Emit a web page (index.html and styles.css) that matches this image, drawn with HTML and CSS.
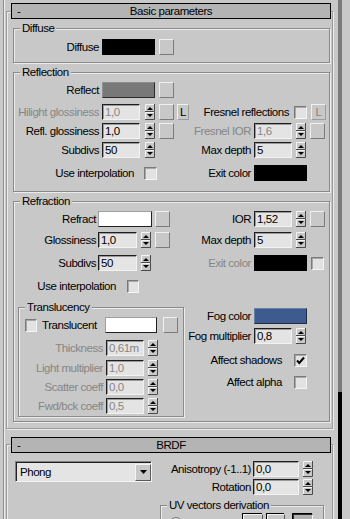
FILE: index.html
```html
<!DOCTYPE html>
<html>
<head>
<meta charset="utf-8">
<title>Basic parameters</title>
<link rel="stylesheet" href="styles.css">
</head>
<body>
<svg class="defs" aria-hidden="true">
  <symbol id="spin" viewBox="0 0 10 16">
    <rect width="10" height="16" fill="#c8c8c8"/>
    <path d="M0.5 7V0.5H9" stroke="#f4f4f4" fill="none"/>
    <path d="M9.5 0V7.5H0" stroke="#4a4a4a" fill="none"/>
    <path d="M0.5 15V8.5H9" stroke="#f4f4f4" fill="none"/>
    <path d="M9.5 8V15.5H0" stroke="#4a4a4a" fill="none"/>
    <path d="M5 3L8 6H2Z" fill="#000"/>
    <path d="M2 10H8L5 13Z" fill="#000"/>
  </symbol>
  <symbol id="down" viewBox="0 0 7 4">
    <path d="M0 0H7L3.5 4Z" fill="#000"/>
  </symbol>
  <symbol id="check" viewBox="0 0 11 11">
    <path d="M2 5.5L4.3 8L9 2.5" stroke="#000" stroke-width="2" fill="none"/>
  </symbol>
</svg>

<div class="panel">
  <div class="main">
    <section class="rollout r1">
      <div class="rh"><span class="minus">-</span><span class="title">Basic parameters</span><span></span></div>

      <div class="grp g-diff">
        <div class="legend">Diffuse</div>
        <div class="row mt5">
          <div class="L">
            <span class="lab w85">Diffuse</span>
            <span class="sw black ml3"></span>
            <span class="btn ml4"></span>
          </div>
        </div>
      </div>

      <div class="grp g-refl">
        <div class="legend">Reflection</div>
        <div class="row mt4">
          <div class="L">
            <span class="lab w85">Reflect</span>
            <span class="sw gray ml3"></span>
            <span class="btn ml4"></span>
          </div>
        </div>
        <div class="row mt6">
          <div class="L">
            <span class="lab w85 dis">Hilight glossiness</span>
            <span class="inp dis ml3">1,0</span>
            <svg class="spin ml5"><use href="#spin"/></svg>
            <span class="btn ml4"></span>
            <span class="lbtn ml3">L</span>
          </div>
          <div class="R end">
            <span class="lab">Fresnel reflections</span>
            <span class="chk ml5"></span>
            <span class="lbtn wide dis ml4">L</span>
          </div>
        </div>
        <div class="row mt3">
          <div class="L">
            <span class="lab w85">Refl. glossiness</span>
            <span class="inp ml3">1,0</span>
            <svg class="spin ml5"><use href="#spin"/></svg>
            <span class="btn ml4"></span>
          </div>
          <div class="R">
            <span class="lab w61 dis">Fresnel IOR</span>
            <span class="inp dis ml3">1,6</span>
            <svg class="spin ml4"><use href="#spin"/></svg>
            <span class="btn ml4"></span>
          </div>
        </div>
        <div class="row mt3">
          <div class="L">
            <span class="lab w85">Subdivs</span>
            <span class="inp ml3">50</span>
            <svg class="spin ml5"><use href="#spin"/></svg>
          </div>
          <div class="R">
            <span class="lab w61">Max depth</span>
            <span class="inp ml3">5</span>
            <svg class="spin ml4"><use href="#spin"/></svg>
          </div>
        </div>
        <div class="row mt7">
          <div class="L">
            <span class="lab w120">Use interpolation</span>
            <span class="chk ml10"></span>
          </div>
          <div class="R">
            <span class="lab w61">Exit color</span>
            <span class="sw black ml3"></span>
          </div>
        </div>
      </div>

      <div class="grp g-refr">
        <div class="legend">Refraction</div>
        <div class="row mt4">
          <div class="L">
            <span class="lab w82">Refract</span>
            <span class="sw white w54 ml2"></span>
            <span class="btn ml3"></span>
          </div>
          <div class="R">
            <span class="lab w61">IOR</span>
            <span class="inp ml3">1,52</span>
            <svg class="spin ml4"><use href="#spin"/></svg>
            <span class="btn ml4"></span>
          </div>
        </div>
        <div class="row mt5">
          <div class="L">
            <span class="lab w82">Glossiness</span>
            <span class="inp w39 ml2">1,0</span>
            <svg class="spin ml4"><use href="#spin"/></svg>
            <span class="btn ml4"></span>
          </div>
          <div class="R">
            <span class="lab w61">Max depth</span>
            <span class="inp ml3">5</span>
            <svg class="spin ml4"><use href="#spin"/></svg>
          </div>
        </div>
        <div class="row mt7">
          <div class="L">
            <span class="lab w82">Subdivs</span>
            <span class="inp w39 ml2">50</span>
            <svg class="spin ml4"><use href="#spin"/></svg>
          </div>
          <div class="R">
            <span class="lab w61 dis">Exit color</span>
            <span class="sw black ml3"></span>
            <span class="chk ml4"></span>
          </div>
        </div>
        <div class="row mt7">
          <div class="L">
            <span class="lab w102">Use interpolation</span>
            <span class="chk small ml11"></span>
          </div>
        </div>

        <div class="lower">
          <div class="grp g-trans">
            <div class="legend">Translucency</div>
            <div class="row mt4">
              <span class="chk small ml6"></span>
              <span class="tlab ml5">Translucent</span>
              <span class="sw white w52"></span>
              <span class="btn ml6"></span>
            </div>
            <div class="row mt7">
              <span class="lab w84 dis">Thickness</span>
              <span class="inp dis ml3">0,61m</span>
              <svg class="spin ml4"><use href="#spin"/></svg>
            </div>
            <div class="row mt4">
              <span class="lab w84 dis">Light multiplier</span>
              <span class="inp dis ml3">1,0</span>
              <svg class="spin ml4"><use href="#spin"/></svg>
            </div>
            <div class="row mt3">
              <span class="lab w84 dis">Scatter coeff</span>
              <span class="inp dis ml3">0,0</span>
              <svg class="spin ml4"><use href="#spin"/></svg>
            </div>
            <div class="row mt3">
              <span class="lab w84 dis">Fwd/bck coeff</span>
              <span class="inp dis ml3">0,5</span>
              <svg class="spin ml4"><use href="#spin"/></svg>
            </div>
          </div>
          <div class="fogcol">
            <div class="row mt1">
              <span class="lab w67">Fog color</span>
              <span class="sw fog ml3"></span>
            </div>
            <div class="row mt4">
              <span class="lab w67">Fog multiplier</span>
              <span class="inp ml3">0,8</span>
              <svg class="spin ml4"><use href="#spin"/></svg>
            </div>
            <div class="row mt8">
              <span class="lab w98">Affect shadows</span>
              <span class="chk ml12"><svg class="tick"><use href="#check"/></svg></span>
            </div>
            <div class="row mt6">
              <span class="lab w98">Affect alpha</span>
              <span class="chk ml12"></span>
            </div>
          </div>
        </div>
      </div>
    </section>

    <section class="rollout r2">
      <div class="rh"><span class="minus">-</span><span class="title">BRDF</span><span></span></div>
      <div class="brdf">
        <div class="dd">
          <span class="ddtext">Phong</span>
          <span class="ddbtn"><svg class="ddarrow"><use href="#down"/></svg></span>
        </div>
        <div class="brcol">
          <div class="row">
            <span class="lab w99">Anisotropy (-1..1)</span>
            <span class="inp w46 ml2">0,0</span>
            <svg class="spin ml4"><use href="#spin"/></svg>
          </div>
          <div class="row mt2">
            <span class="lab w99">Rotation</span>
            <span class="inp w46 ml2">0,0</span>
            <svg class="spin ml4"><use href="#spin"/></svg>
          </div>
          <div class="grp g-uv">
            <div class="legend">UV vectors derivation</div>
            <div class="row mt4">
              <span class="radio ml9"></span>
              <span class="uvlab ml4">Local axis</span>
              <span class="tbtn w20">X</span>
              <span class="tbtn w18 ml4">Y</span>
              <span class="tbtn on w20 ml8">Z</span>
            </div>
          </div>
        </div>
      </div>
    </section>
  </div>
  <div class="scroll"></div>
</div>
</body>
</html>
```

FILE: styles.css
```css
* { box-sizing: border-box; }

body {
  margin: 0;
  width: 350px;
  height: 519px;
  overflow: hidden;
  background: #c8c8c8;
  font-family: "Liberation Sans", Arial, sans-serif;
  font-size: 11.5px;
  letter-spacing: -0.45px;
  color: #000;
}

.defs { position: absolute; width: 0; height: 0; overflow: hidden; }

.panel { display: flex; height: 519px; }

.main {
  width: 338px;
  flex-shrink: 0;
  padding-left: 6px;
  background-image: linear-gradient(to right,
    transparent 3px, #8e8e8e 3px, #8e8e8e 4px,
    #ececec 4px, #ececec 5px, transparent 5px);
}

.scroll {
  width: 4px;
  flex-shrink: 0;
  background: linear-gradient(#7a7a7a 392px, #000 392px);
}

/* rollouts */
.rollout {
  width: 327px;
  border: 1px solid #9a9a9a;
  box-shadow: inset 1px 1px 0 #ececec, 1px 1px 0 #ececec;
}
.r1 { margin-top: 11px; padding-bottom: 6px; }
.r2 { margin-top: 15px; padding-bottom: 40px; }

.rh {
  margin: -9px 1px 0 4px;
  height: 16px;
  border: 1px solid #000;
  background: #b4b4b4;
  display: grid;
  grid-template-columns: 1fr auto 1fr;
  align-items: center;
  line-height: 14px;
}
.r2 .rh { margin-top: -8px; }
.minus { padding-left: 5px; }

/* group boxes */
.grp {
  margin: 9px 2px 0 6px;
  border: 1px solid #8a8a8a;
  box-shadow: inset 1px 1px 0 #ececec, 1px 1px 0 #ececec;
}
.legend {
  width: fit-content;
  margin: -7px 0 0 6px;
  padding: 0 2px;
  height: 12px;
  line-height: 12px;
  background: #c8c8c8;
}
.g-diff { padding-bottom: 7px; }
.g-refl { padding-bottom: 10px; }
.g-refr { padding-bottom: 4px; }

/* rows */
.row { display: flex; align-items: center; height: 16px; }
.L { display: flex; align-items: center; width: 176px; flex-shrink: 0; height: 16px; }
.R { display: flex; align-items: center; flex: 1; height: 16px; }
.R.end { justify-content: flex-end; padding-right: 3px; }

.lab { text-align: right; white-space: nowrap; flex-shrink: 0; }
.dis { color: #868686; }

.w61 { width: 61px; }
.w67 { width: 67px; }
.w82 { width: 82px; }
.w84 { width: 84px; }
.w85 { width: 85px; }
.w98 { width: 98px; }
.w99 { width: 99px; }
.w102 { width: 102px; }
.w120 { width: 120px; }

.mt1 { margin-top: 1px; }
.mt2 { margin-top: 2px; }
.mt3 { margin-top: 3px; }
.mt4 { margin-top: 4px; }
.mt5 { margin-top: 5px; }
.mt6 { margin-top: 6px; }
.mt7 { margin-top: 7px; }
.mt8 { margin-top: 8px; }

.ml2 { margin-left: 2px; }
.ml3 { margin-left: 3px; }
.ml4 { margin-left: 4px; }
.ml5 { margin-left: 5px; }
.ml6 { margin-left: 6px; }
.ml8 { margin-left: 8px; }
.ml9 { margin-left: 9px; }
.ml10 { margin-left: 10px; }
.ml11 { margin-left: 11px; }
.ml12 { margin-left: 12px; }

/* controls */
.inp {
  flex-shrink: 0;
  width: 38px;
  height: 16px;
  border: 1px solid;
  border-color: #1e1e1e #f2f2f2 #f2f2f2 #1e1e1e;
  box-shadow: inset 1px 1px 0 #9a9a9a;
  background: #e4e4e4;
  padding-left: 2px;
  line-height: 14px;
  white-space: nowrap;
  overflow: hidden;
}
.inp.w39 { width: 39px; }
.inp.w46 { width: 46px; }

.spin { width: 10px; height: 16px; flex-shrink: 0; display: block; }

.btn {
  flex-shrink: 0;
  width: 15px;
  height: 16px;
  border: 1px solid;
  border-color: #f0f0f0 #7c7c7c #7c7c7c #f0f0f0;
  background: #c8c8c8;
}

.lbtn {
  flex-shrink: 0;
  width: 12px;
  height: 16px;
  border: 1px solid;
  border-color: #f0f0f0 #9c9c9c #9c9c9c #f0f0f0;
  display: flex;
  align-items: center;
  justify-content: center;
  line-height: 14px;
}
.lbtn.wide { width: 15px; }

.chk {
  flex-shrink: 0;
  width: 13px;
  height: 13px;
  border: 1px solid;
  border-color: #7a7a7a #f4f4f4 #f4f4f4 #7a7a7a;
  box-shadow: inset 1px 1px 0 #a8a8a8;
  background: #e2e2e2;
  display: flex;
  align-items: center;
  justify-content: center;
}
.chk.small { width: 12px; height: 13px; }
.tick { width: 11px; height: 11px; display: block; }

.sw {
  flex-shrink: 0;
  width: 53px;
  height: 16px;
  border: 1px solid;
  border-color: #a0a0a0 #202020 #202020 #a0a0a0;
}
.sw.w54 { width: 54px; }
.sw.w52 { width: 52px; }
.black { background: #000; border-color: #000; }
.gray { background: #787878; border-color: #8e8e8e #2a2a2a #2a2a2a #8e8e8e; }
.white { background: #fff; }
.fog { background: #3d5b8e; border-color: #6a7ea0 #1c2a44 #1c2a44 #6a7ea0; }

/* lower refraction section */
.lower { display: flex; align-items: flex-start; margin-top: 13px; }
.g-trans { margin: 0 0 0 4px; width: 166px; flex-shrink: 0; padding-bottom: 2px; }
.tlab { width: 63px; flex-shrink: 0; white-space: nowrap; }
.fogcol { flex: 1; }

/* BRDF */
.brdf { display: flex; align-items: flex-start; margin-top: 8px; }
.dd {
  margin-left: 8px;
  width: 137px;
  height: 21px;
  flex-shrink: 0;
  display: flex;
  align-items: center;
  border: 1px solid;
  border-color: #808080 #f4f4f4 #f4f4f4 #808080;
  box-shadow: inset 1px 1px 0 #202020;
  background: #e4e4e4;
}
.ddtext { padding-left: 4px; flex: 1; }
.ddbtn {
  width: 16px;
  height: 17px;
  margin-top: 1px;
  border: 1px solid;
  border-color: #f4f4f4 #5a5a5a #5a5a5a #f4f4f4;
  background: #c8c8c8;
  display: flex;
  align-items: center;
  justify-content: center;
}
.ddarrow { width: 7px; height: 4px; display: block; }

.brcol { flex: 1; }
.g-uv { margin: 10px 0 0 8px; width: 164px; height: 40px; }
.radio {
  flex-shrink: 0;
  width: 12px;
  height: 12px;
  border-radius: 50%;
  border: 1px solid;
  border-color: #7a7a7a #f4f4f4 #f4f4f4 #7a7a7a;
  background: #e2e2e2;
}
.uvlab { width: 57px; flex-shrink: 0; white-space: nowrap; }
.tbtn {
  flex-shrink: 0;
  height: 18px;
  border: 1px solid;
  border-color: #f4f4f4 #5a5a5a #5a5a5a #f4f4f4;
  box-shadow: -1px -1px 0 #000;
  display: flex;
  align-items: center;
  justify-content: center;
}
.tbtn.w20 { width: 20px; }
.tbtn.w18 { width: 18px; }
.tbtn.on { border-color: #2a2a2a #f4f4f4 #f4f4f4 #2a2a2a; background: #b0b0b0; }
```
